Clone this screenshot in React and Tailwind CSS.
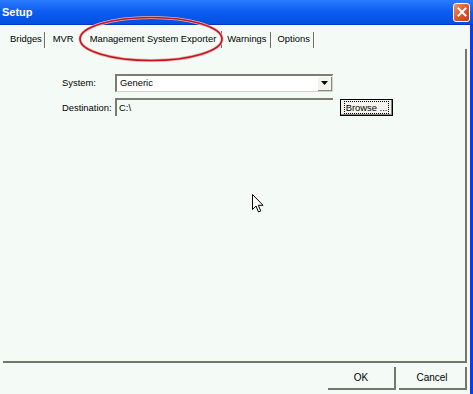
export default function App() {
  const font = { fontFamily: '"Liberation Sans", Arial, sans-serif' };
  return (
    <div className="flex h-[394px] w-[473px] flex-col overflow-hidden bg-[#f4fbf7] text-[9.4px] text-black" style={font}>
      <div className="flex h-[25px] shrink-0 items-center justify-between border-b border-[#0037c4] bg-gradient-to-b from-[#2b7bff] via-[#0b5cf0] to-[#0350e0] pl-[2px] pr-[3px]">
        <span className="text-[11px] font-bold text-white">Setup</span>
        <span className="flex h-[19px] w-[17px] items-center justify-center rounded-[3px] border border-white bg-gradient-to-br from-[#f0906a] via-[#e2572c] to-[#c83a16]">
          <svg width="10" height="10" viewBox="0 0 10 10">
            <path d="M1.5 1.5 L8.5 8.5 M8.5 1.5 L1.5 8.5" stroke="white" strokeWidth="2" strokeLinecap="square" />
          </svg>
        </span>
      </div>

      <div className="relative flex flex-1 flex-col border-r-[3px] border-[#0a3cf0] pl-[3px]">
        <div className="flex h-[24px] items-center pl-[7px] pt-[5px]">
          <span>Bridges</span>
          <span className="ml-[2px] h-[16px] w-[2px] border-l border-r border-l-[#6d6d5e] border-r-white" />
          <span className="ml-[7px]">MVR</span>
          <span className="ml-[16px]">Management System Exporter</span>
          <span className="ml-[5px] mr-[4px] h-[17px] w-[2px] border-l border-r border-l-[#6d6d5e] border-r-white" />
          <span>Warnings</span>
          <span className="ml-[3px] h-[16px] w-[2px] border-l border-r border-l-[#6d6d5e] border-r-white" />
          <span className="ml-[6px]">Options</span>
          <span className="ml-[3px] h-[16px] w-[2px] border-l border-r border-l-[#6d6d5e] border-r-white" />
        </div>

        <svg className="pointer-events-none absolute left-[77px] top-[-10px]" width="148" height="48" viewBox="0 0 148 48">
          <ellipse cx="74" cy="24" rx="71" ry="21.5" fill="none" stroke="#e8b0b0" strokeWidth="3" />
          <ellipse cx="74" cy="24" rx="71" ry="21.5" fill="none" stroke="#c8141e" strokeWidth="1.6" />
        </svg>

        <div className="mr-[3px] h-[314px] border-b-2 border-r-2 border-b-[#74766a] border-r-[#74766a] pl-[59px] pt-[25px]">
          <div className="flex items-center">
            <span className="w-[53px]">System:</span>
            <div className="flex h-[18px] w-[218px] items-center justify-between border-l-2 border-t-2 border-b border-r border-l-[#7d7d6e] border-t-[#7d7d6e] border-b-[#d6d3c6] border-r-[#d6d3c6] bg-white pl-[3px]">
              <span>Generic</span>
              <span className="flex h-[14px] w-[14px] items-center justify-center border-b border-r border-[#8a8a7c] bg-[#f4f3ee]">
                <svg width="7" height="4" viewBox="0 0 7 4">
                  <path d="M0 0 H7 L3.5 4 Z" fill="black" />
                </svg>
              </span>
            </div>
          </div>
          <div className="mt-[6px] flex items-start">
            <span className="mt-[3px] w-[53px]">Destination:</span>
            <div className="flex h-[18px] w-[218px] items-center border-l-2 border-t-2 border-l-[#7d7d6e] border-t-[#7d7d6e] pl-[2px]">
              C:\
            </div>
            <button className="ml-[7px] mt-[1px] flex h-[17px] w-[53px] items-center justify-center border border-black bg-[#f4f3ee] shadow-[inset_-1px_-1px_0_#8a8a7c]">
              <span className="border border-dotted border-black px-[1px] leading-[11px]">Browse ...</span>
            </button>
          </div>
        </div>

        <div className="mr-[3px] mt-[4px] flex justify-end gap-[3px] text-[10px]">
          <button className="flex h-[23px] w-[68px] items-center justify-center border-b-2 border-r-2 border-b-[#74766a] border-r-[#74766a]">OK</button>
          <button className="flex h-[23px] w-[68px] items-center justify-center border-b-2 border-r-2 border-b-[#74766a] border-r-[#74766a]">Cancel</button>
        </div>

        <svg className="pointer-events-none absolute left-[252px] top-[169px]" width="13" height="19" viewBox="0 0 13 19">
          <path d="M0.5 0.5 V15.5 L4 12 L6.5 18 L8.8 17 L6.3 11.3 H11 Z" fill="white" stroke="black" strokeWidth="1" />
        </svg>
      </div>
    </div>
  );
}
